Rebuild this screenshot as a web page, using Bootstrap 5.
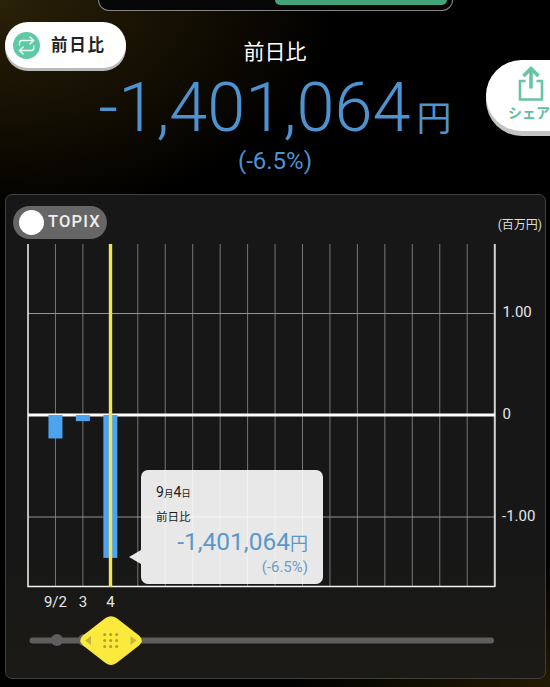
<!DOCTYPE html>
<html lang="ja">

<head>
  <meta charset="utf-8">
  <meta name="viewport" content="width=device-width">
  <title>前日比</title>
  <link href="https://cdn.jsdelivr.net/npm/bootstrap@5.3.3/dist/css/bootstrap.min.css" rel="stylesheet" />
  <script src="https://cdn.jsdelivr.net/npm/bootstrap@5.3.3/dist/js/bootstrap.bundle.min.js"></script>
  <style>
    body {
      height: 687px;
      background: radial-gradient(ellipse 340px 220px at 0 0, #2a2108, #161003 50%, transparent),
        radial-gradient(ellipse 260px 130px at 100% 100%, #241a02, transparent), #000;
      font-family: Roboto, "Noto Sans CJK JP", sans-serif;
      line-height: 1;
    }

    .tab-frame {
      width: 355px;
      height: 11px;
      padding: 0 5px 5px;
      background: #060606;
      border: 1px solid #858585;
      border-top: 0;
      border-radius: 0 0 11px 11px;
    }

    .tab-current {
      width: 172px;
      background: #43a37b;
      border-radius: 0 0 6px 6px;
    }

    .compare-btn {
      left: 5px;
      top: 22px;
      width: 121px;
      height: 46px;
      padding-left: 8px;
      gap: 11px;
      border-radius: 24px;
      box-shadow: 0 3px 0 #b9b9b9;
      font-size: 16.5px;
      letter-spacing: 1.7px;
      color: #222;
    }

    .compare-btn span {
      padding-top: 3px;
    }

    .share-btn {
      left: 486px;
      top: 60px;
      width: 90px;
      height: 71px;
      border-radius: 36px 0 0 36px;
      box-shadow: 0 5px 0 #c4c4c4;
      color: #5fc09c;
      font-size: 14px;
    }

    .share-btn svg {
      margin: 5px 0 0 31px;
    }

    .share-btn span {
      margin: 5px 0 0 22px;
    }

    .summary {
      height: 194px;
      color: #4f92d0;
    }

    .summary-title {
      margin-top: 29px;
      font-size: 21px;
    }

    .summary-value {
      height: 56px;
      margin-top: 15px;
      font-size: 68.5px;
      font-weight: 300;
      line-height: 56px;
    }

    .summary-value .yen {
      margin-left: 6px;
      font-size: 35px;
      font-weight: 400;
    }

    .summary-rate {
      margin-top: 13px;
      font-size: 24px;
    }

    .chart-panel {
      width: 541px;
      height: 485px;
      margin-left: 5px;
      padding: 11px 3px 0 7px;
      background: linear-gradient(#171717 75%, #1b1a15);
      border: 1px solid #3f3f3f;
      border-radius: 7px;
    }

    .topix-switch {
      width: 94px;
      height: 33px;
      padding-left: 6px;
      gap: 4px;
      border-radius: 17px;
      background: #666;
      color: #eee;
      font-size: 16.5px;
      font-weight: 500;
      letter-spacing: 1.2px;
    }

    .switch-knob {
      width: 25px;
      height: 25px;
    }

    .unit {
      margin-top: 13px;
      font-size: 12px;
      color: #ddd;
    }

    .chart-area {
      margin-left: 7px;
    }

    .chart-area text {
      fill: #e6e6e6;
      font-size: 15px;
    }

    .tip {
      left: 121px;
      top: 231px;
      width: 182px;
      height: 114px;
      padding: 15px 15px 0;
      border-radius: 7px;
      background: rgba(255, 255, 255, .9);
      color: #1b1b1b;
      font-size: 11.5px;
    }

    .tip::before {
      content: "";
      position: absolute;
      left: -12px;
      top: 80px;
      border: solid transparent;
      border-width: 7px 12px 7px 0;
      border-right-color: rgba(255, 255, 255, .9);
    }

    .tip .date-num {
      font-size: 14px;
    }

    .tip .kana-unit {
      font-size: 9.5px;
    }

    .tip-value {
      margin-top: 7px;
      font-size: 24.5px;
      color: #5b98ca;
    }

    .tip-value .yen {
      font-size: 18px;
    }

    .tip-rate {
      margin-top: 5px;
      font-size: 15px;
      color: #6b9dc8;
    }
  </style>
</head>

<body class="overflow-hidden position-relative">
  <header class="summary d-flex flex-column align-items-center text-nowrap">
    <div class="tab-frame d-flex justify-content-end flex-shrink-0">
      <div class="tab-current"></div>
    </div>
    <h1 class="summary-title text-white mb-0 fw-normal">前日比</h1>
    <div class="summary-value">-1,401,064<span class="yen">円</span></div>
    <div class="summary-rate">(-6.5%)</div>
  </header>

  <button type="button" class="compare-btn position-absolute bg-white border-0 d-flex align-items-center fw-bold text-nowrap">
    <svg width="27" height="27" viewBox="0 0 27 27">
      <circle cx="13.5" cy="13.5" r="13.5" fill="#5fc9a6" />
      <path d="M6.500 13V11q0-2.500 2.500-2.500H20.500M17 5l3.800 3.500-3.800 3.500M20.800 14v2q0 2.500-2.500 2.500H6.500M10.200 15l-3.800 3.500 3.800 3.500"
        fill="none" stroke="#effff9" stroke-width="1.3" stroke-linecap="round" stroke-linejoin="round" />
    </svg>
    <span>前日比</span>
  </button>

  <button type="button" class="share-btn position-absolute bg-white border-0 p-0 d-flex flex-column align-items-start fw-bold text-nowrap">
    <svg width="28" height="36" viewBox="0 0 28 36">
      <path d="M8.500 16H3v18.500h22V16h-5.500" fill="none" stroke="#67c4a4" stroke-width="2.600" />
      <path d="M14 23.500V4M6.500 11L14 3.500l7.500 7.500" fill="none" stroke="#67c4a4" stroke-width="3.600" />
    </svg>
    <span>シェア</span>
  </button>

  <main class="chart-panel">
    <div class="d-flex justify-content-between align-items-start">
      <div class="topix-switch d-flex align-items-center">
        <span class="switch-knob bg-white rounded-circle"></span>TOPIX
      </div>
      <div class="unit">(百万円)</div>
    </div>

    <div class="chart-area position-relative">
      <svg class="d-block" width="522" height="430" viewBox="20 239 522 430">
        <g id="grid"></g>
        <path d="M28 313.500H495M28 517H495" stroke="#929292" />
        <path d="M28 244V586.500H495" fill="none" stroke="#f4f4f4" stroke-width="1.500" />
        <path d="M494.800 244V587" stroke="#d2d2d2" stroke-width="2" />
        <path d="M28 415H495" stroke="#fff" stroke-width="3" />
        <g id="bars" fill="#4da3ee"></g>
        <path d="M110.500 244V587" stroke="#efe35a" stroke-width="3.400" />
        <text x="502.500" y="317">1.00</text>
        <text x="502.500" y="419">0</text>
        <text x="502" y="521">-1.00</text>
        <g id="days" text-anchor="middle"></g>

        <!-- date slider -->
        <path d="M32.500 640.500H491" stroke="#5e5e5e" stroke-width="6" stroke-linecap="round" />
        <circle cx="57" cy="640" r="6" fill="#5e5e5e" />
        <circle cx="84" cy="640" r="6" fill="#5e5e5e" />
        <path d="M105.500 618Q111 614.500 116.500 618L139 635.500Q144.500 640.500 139 645.500L116.500 663Q111 667 105.500 663L83 645.500Q77.500 640.500 83 635.500Z" fill="#fbe93d" />
        <path d="M91 636v9l-6-4.500zM130.500 636v9l6-4.500z" fill="#c9b53c" />
        <g id="grip" fill="#b39f2f"></g>
      </svg>

      <div class="tip position-absolute text-nowrap">
        <div><span class="date-num">9</span><span class="kana-unit">月</span><span class="date-num">4</span><span class="kana-unit">日</span></div>
        <div class="mt-2 pt-1">前日比</div>
        <div class="tip-value text-end">-1,401,064<span class="yen">円</span></div>
        <div class="tip-rate text-end">(-6.5%)</div>
      </div>
    </div>
  </main>

  <script>
    const days = [
      { label: "9/2", value: -0.23 },
      { label: "3", value: -0.06 },
      { label: "4", value: -1.401 },
    ];
    const left = 28;
    const step = 27.45;
    const zero = 415;
    const unit = 102;

    let grid = "";
    for (let i = 1; i < 17; i++) {
      const x = left + i * step;
      grid += `<path d="M${x} 244V586" stroke="#777777" />`;
    }
    document.querySelector("#grid").innerHTML = grid;

    let bars = "";
    let labels = "";
    days.forEach((day, i) => {
      const x = left + (i + 1) * step;
      bars += `<rect x="${x - 7}" y="${zero}" width="14" height="${-day.value * unit}" />`;
      labels += `<text x="${x}" y="607">${day.label}</text>`;
    });
    document.querySelector("#bars").innerHTML = bars;
    document.querySelector("#days").innerHTML = labels;

    let grip = "";
    for (let i = 0; i < 9; i++) {
      grip += `<circle cx="${104.7 + (i % 3) * 6}" cy="${634.5 + Math.floor(i / 3) * 6}" r="1.500" />`;
    }
    document.querySelector("#grip").innerHTML = grip;
  </script>
</body>

</html>
